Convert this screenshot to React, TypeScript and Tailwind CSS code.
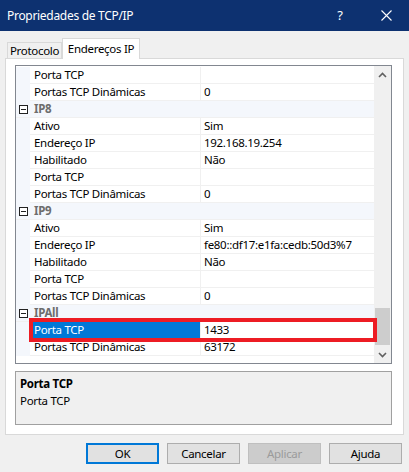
import { ReactNode } from "react";

type Row =
  | { kind: "cat"; label: string }
  | { kind: "prop"; label: string; value: string; selected?: boolean };

const rows: Row[] = [
  { kind: "prop", label: "Porta TCP", value: "" },
  { kind: "prop", label: "Portas TCP Dinâmicas", value: "0" },
  { kind: "cat", label: "IP8" },
  { kind: "prop", label: "Ativo", value: "Sim" },
  { kind: "prop", label: "Endereço IP", value: "192.168.19.254" },
  { kind: "prop", label: "Habilitado", value: "Não" },
  { kind: "prop", label: "Porta TCP", value: "" },
  { kind: "prop", label: "Portas TCP Dinâmicas", value: "0" },
  { kind: "cat", label: "IP9" },
  { kind: "prop", label: "Ativo", value: "Sim" },
  { kind: "prop", label: "Endereço IP", value: "fe80::df17:e1fa:cedb:50d3%7" },
  { kind: "prop", label: "Habilitado", value: "Não" },
  { kind: "prop", label: "Porta TCP", value: "" },
  { kind: "prop", label: "Portas TCP Dinâmicas", value: "0" },
  { kind: "cat", label: "IPAll" },
  { kind: "prop", label: "Porta TCP", value: "1433", selected: true },
  { kind: "prop", label: "Portas TCP Dinâmicas", value: "63172" },
];

function MinusBox() {
  return (
    <div className="w-[9px] h-[9px] border border-[#222] bg-white flex items-center justify-center">
      <div className="w-[5px] h-px bg-[#222]" />
    </div>
  );
}

function Button({ children, primary, disabled }: { children: ReactNode; primary?: boolean; disabled?: boolean }) {
  return (
    <button
      className={`w-[73px] h-[21px] flex items-center justify-center ${
        primary
          ? "border-2 border-[#0078d7] bg-[#e1e1e1] text-black"
          : disabled
          ? "border border-[#bfbfbf] bg-[#cccccc] text-[#9b9b9b]"
          : "border border-[#adadad] bg-[#e1e1e1] text-black"
      }`}
    >
      {children}
    </button>
  );
}

export default function App() {
  return (
    <div
      className="w-[409px] h-[472px] bg-[#f0f0f0] flex flex-col text-[11.5px] tracking-[-0.3px] text-black"
      style={{ fontFamily: "'Noto Sans', 'Open Sans', sans-serif" }}
    >
      {/* Title bar */}
      <div className="h-[31px] bg-[#0d3170] flex items-center text-white shrink-0">
        <span className="pl-[7px] flex-1 text-[12px]">Propriedades de TCP/IP</span>
        <span className="w-[46px] text-center text-[13px]">?</span>
        <div className="w-[46px] flex justify-center">
          <svg width="11" height="11" viewBox="0 0 11 11">
            <path d="M0.5 0.5 L10.5 10.5 M10.5 0.5 L0.5 10.5" stroke="white" strokeWidth="1.1" />
          </svg>
        </div>
      </div>

      {/* Tabs */}
      <div className="px-[5px] pt-[7px] flex flex-col">
        <div className="flex items-end h-[20px] pl-[2px] relative z-10">
          <div className="h-[16px] w-[55px] border border-b-0 border-[#d9d9d9] bg-[#f0f0f0] flex items-center justify-center">
            Protocolo
          </div>
          <div className="h-[21px] w-[78px] -mb-px border border-b-0 border-[#d9d9d9] bg-white flex items-center justify-center">
            Endereços IP
          </div>
        </div>

        {/* Panel */}
        <div className="h-[377px] border border-[#d9d9d9] bg-white pl-[9px] pr-[11px] pt-[6px] pb-[9px] flex flex-col gap-[7px]">
          {/* Property grid */}
          <div className="h-[301px] border border-[#828790] flex relative">
            <div className="flex-1 flex flex-col pt-px">
              {rows.map((r, i) =>
                r.kind === "cat" ? (
                  <div key={i} className="h-[17px] flex items-center bg-[#f4f7fc] border-b border-[#f0f0f0]">
                    <div className="w-[14px] flex justify-center">
                      <MinusBox />
                    </div>
                    <span className="pl-[4px] font-bold text-[#6d6d6d]">{r.label}</span>
                  </div>
                ) : (
                  <div key={i} className="h-[17px] flex">
                    <div className="w-[14px] bg-[#f4f7fc]" />
                    <div
                      className={`w-[171px] flex items-center pl-[4px] border-b border-r border-[#f0f0f0] ${
                        r.selected ? "bg-[#0078d7] text-white" : ""
                      }`}
                    >
                      {r.label}
                    </div>
                    <div className="flex-1 flex items-center pl-[3px] border-b border-[#f0f0f0]">{r.value}</div>
                  </div>
                )
              )}
            </div>

            {/* Scrollbar */}
            <div className="w-[17px] bg-[#f0f0f0] flex flex-col items-center">
              <div className="h-[17px] flex items-center justify-center">
                <svg width="9" height="6" viewBox="0 0 9 6">
                  <path d="M1 5 L4.5 1.5 L8 5" stroke="#606060" strokeWidth="1.6" fill="none" />
                </svg>
              </div>
              <div className="flex-1 w-full flex flex-col justify-end pb-[1px]">
                <div className="h-[37px] ml-px w-[15px] bg-[#cdcdcd]" />
              </div>
              <div className="h-[17px] flex items-center justify-center">
                <svg width="9" height="6" viewBox="0 0 9 6">
                  <path d="M1 1 L4.5 4.5 L8 1" stroke="#606060" strokeWidth="1.6" fill="none" />
                </svg>
              </div>
            </div>

            {/* Red annotation */}
            <div className="absolute left-[13px] top-[252px] w-[348px] h-[24px] border-[4px] border-[#ed1c24] pointer-events-none" />
          </div>

          {/* Description */}
          <div className="h-[54px] border border-[#a0a0a0] bg-[#f0f0f0] px-[4px] pt-[3px] leading-[17px]">
            <div className="font-bold">Porta TCP</div>
            <div>Porta TCP</div>
          </div>
        </div>
      </div>

      {/* Buttons */}
      <div className="flex justify-end gap-[8px] pr-[7px] pt-[8px]">
        <Button primary>OK</Button>
        <Button>Cancelar</Button>
        <Button disabled>Aplicar</Button>
        <Button>Ajuda</Button>
      </div>
    </div>
  );
}
